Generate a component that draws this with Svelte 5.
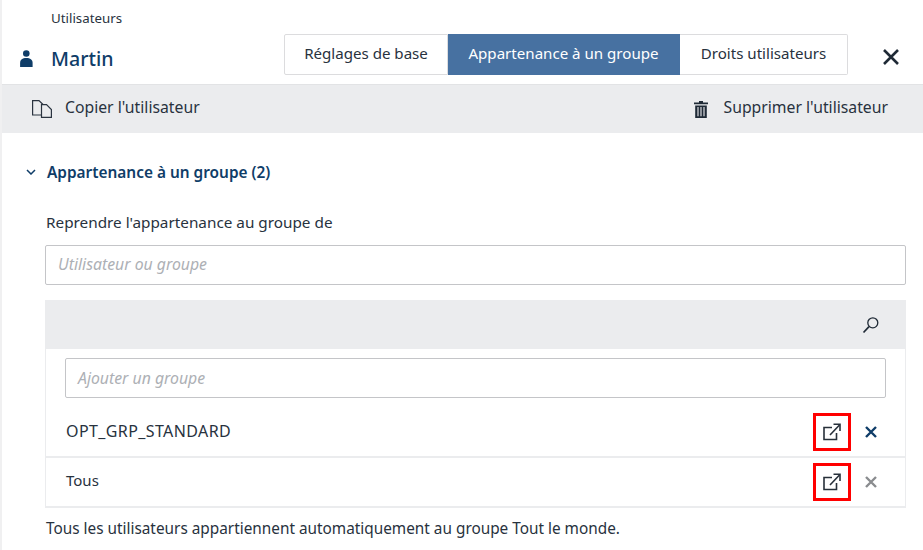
<script>
  const rows = [
    { name: 'OPT_GRP_STANDARD', muted: false },
    { name: 'Tous', muted: true }
  ];
</script>

<div class="page">
  <header class="head">
    <div class="crumb">Utilisateurs</div>
    <div class="titlebar">
      <svg class="user" width="13" height="17" viewBox="0 0 13 17"><circle cx="6.3" cy="3.5" r="3.3" fill="#0f3d68"/><path d="M0.1 17V13C0.1 9.8 2.4 8 6.3 8S12.6 9.8 12.6 13V17Z" fill="#0f3d68"/></svg>
      <h1>Martin</h1>
      <div class="tabs">
        <div class="tab t1">Réglages de base</div>
        <div class="tab active t2">Appartenance à un groupe</div>
        <div class="tab t3">Droits utilisateurs</div>
      </div>
      <svg class="close" width="18" height="18" viewBox="0 0 18 18"><path d="M2 2L16 16M16 2L2 16" stroke="#1f2a36" stroke-width="2.6" fill="none"/></svg>
    </div>
  </header>

  <div class="toolbar">
    <div class="action">
      <svg class="copy" width="20" height="18" viewBox="0 0 20 18" fill="none" stroke="#2b3440" stroke-width="1.2"><path d="M9 15H0.6V0.6H7L11 4.5"/><path d="M9.5 4.6H14.5L19.4 9.5V17.4H9.5Z" fill="#ebecee"/></svg>
      <span>Copier l'utilisateur</span>
    </div>
    <div class="action">
      <svg class="trash" width="14" height="17" viewBox="0 0 14 17"><path d="M5 0H9V1.5H14V3.2H0V1.5H5Z M1.2 4.4H12.8V17H1.2Z" fill="#1f2a36"/><path d="M4 6V15.2M7 6V15.2M10 6V15.2" stroke="#ebecee" stroke-width="1.1"/></svg>
      <span>Supprimer l'utilisateur</span>
    </div>
  </div>

  <main class="content">
    <div class="section-title">
      <svg width="10" height="6" viewBox="0 0 10 6" fill="none"><path d="M1 1L5 5L9 1" stroke="#0f3d68" stroke-width="1.5"/></svg>
      <h2>Appartenance à un groupe (2)</h2>
    </div>
    <div class="label">Reprendre l'appartenance au groupe de</div>
    <div class="input outer">Utilisateur ou groupe</div>

    <div class="panel">
      <div class="panel-bar">
        <svg width="18" height="18" viewBox="0 0 18 18" fill="none" stroke="#1f2a36" stroke-width="1.3"><circle cx="10.8" cy="6.8" r="5"/><path d="M7 10.6L1.5 16.5" stroke-width="1.7"/></svg>
      </div>
      <div class="panel-input"><div class="input">Ajouter un groupe</div></div>
      {#each rows as row}
        <div class="row">
          <span class="name" class:caps={!row.muted}>{row.name}</span>
          <span class="open">
            <svg width="18" height="18" viewBox="0 0 18 18" fill="none" stroke="#27303a" stroke-width="1.6"><path d="M9 4.5H1V16.5H13.5V10"/><path d="M7 12L16.5 2"/><path d="M10.5 1.3H17V8"/></svg>
          </span>
          <svg class="del" class:muted={row.muted} width="12" height="12" viewBox="0 0 12 12" fill="none"><path d="M1 1L11 11M11 1L1 11" stroke-width="2.4"/></svg>
        </div>
      {/each}
    </div>
    <p class="note">Tous les utilisateurs appartiennent automatiquement au groupe Tout le monde.</p>
  </main>
</div>

<style>
  :global(body) {
    margin: 0;
    background: #fff;
  }
  .page {
    width: 923px;
    height: 550px;
    box-sizing: border-box;
    overflow: hidden;
    border-left: 2px solid #f0f0f1;
    font-family: "Noto Sans", sans-serif;
    color: #28323e;
    font-size: 15.3px;
  }
  .head {
    height: 84px;
    box-sizing: border-box;
  }
  .crumb {
    padding: 10px 0 0 49px;
    font-size: 13.3px;
    line-height: 17px;
  }
  .titlebar {
    display: flex;
    align-items: flex-start;
    height: 42px;
    margin-top: 7px;
    padding-left: 18px;
  }
  .user { flex: none; margin-top: 16px; }
  h1 {
    margin: 11px 0 0 18px;
    font-size: 19.6px;
    line-height: 28px;
    font-weight: 500;
    color: #0f3d68;
    width: 233px;
  }
  .tabs {
    display: flex;
    height: 41px;
    font-size: 15.1px;
  }
  .tab {
    display: flex;
    align-items: center;
    justify-content: center;
    box-sizing: border-box;
    border: 1px solid #dcdcde;
    border-left: 0;
    padding-bottom: 3px;
    white-space: nowrap;
  }
  .t1 { width: 164px; border-left: 1px solid #dcdcde; border-radius: 2px 0 0 2px; }
  .t2 { width: 232px; }
  .t3 { width: 168px; border-radius: 0 2px 2px 0; }
  .active {
    background: #4771a1;
    border-color: #4771a1;
    color: #fff;
  }
  .close { margin-left: 34px; margin-top: 14px; flex: none; }
  .toolbar {
    height: 49px;
    background: #ebecee;
    border-top: 1px solid #e2e3e5;
    box-sizing: border-box;
    display: flex;
    justify-content: space-between;
    align-items: center;
    padding: 0 35px 0 30px;
    font-size: 15.75px;
  }
  .action {
    display: flex;
    align-items: center;
    gap: 13px;
  }
  .action span { margin-top: -4px; }
  .copy { margin-top: -1px; }
  .trash { margin-right: 3px; }
  .content {
    padding: 0 17px 0 43px;
  }
  .section-title {
    display: flex;
    align-items: center;
    gap: 11px;
    height: 20px;
    margin-top: 29px;
    margin-left: -19px;
    color: #0f3d68;
  }
  h2 {
    margin: 0;
    font-size: 15.4px;
    font-weight: 600;
  }
  .label {
    margin-top: 29px;
    padding-left: 1px;
    line-height: 22px;
  }
  .input {
    height: 40px;
    box-sizing: border-box;
    border: 1px solid #c4c5c8;
    border-radius: 2px;
    background: #fff;
    display: flex;
    align-items: center;
    padding: 0 0 2px 12px;
    font-style: italic;
    font-size: 15.8px;
    color: #adb0b5;
  }
  .outer { margin-top: 12px; }
  .panel {
    margin-top: 15px;
    border: 2px solid #ebecee;
    border-top: 0;
    border-left-width: 1px;
    border-right-width: 1px;
  }
  .panel-bar {
    height: 49px;
    background: #ebecee;
    display: flex;
    align-items: center;
    justify-content: flex-end;
    padding-right: 25px;
  }
  .panel-input { padding: 9px 19px 0; height: 50px; }
  .panel-input .input { padding-bottom: 0; }
  .row {
    display: flex;
    align-items: center;
    height: 48px;
    padding-left: 20px;
    padding-right: 28px;
  }
  .row + .row { border-top: 2px solid #ebecee; }
  .name { flex: 1; margin-top: -4px; font-size: 15px; }
  .caps { font-size: 16px; letter-spacing: 0.4px; margin-top: -2px; }
  .open {
    width: 38px;
    height: 38px;
    box-sizing: border-box;
    border: 3px solid #f00;
    display: flex;
    align-items: center;
    justify-content: center;
    margin-right: 14px;
  }
  .del { stroke: #0f3d68; flex: none; }
  .del.muted { stroke: #8a8c8f; }
  .note { margin: 10px 0 0; padding-left: 1px; line-height: 20px; font-size: 15.35px; }
</style>
